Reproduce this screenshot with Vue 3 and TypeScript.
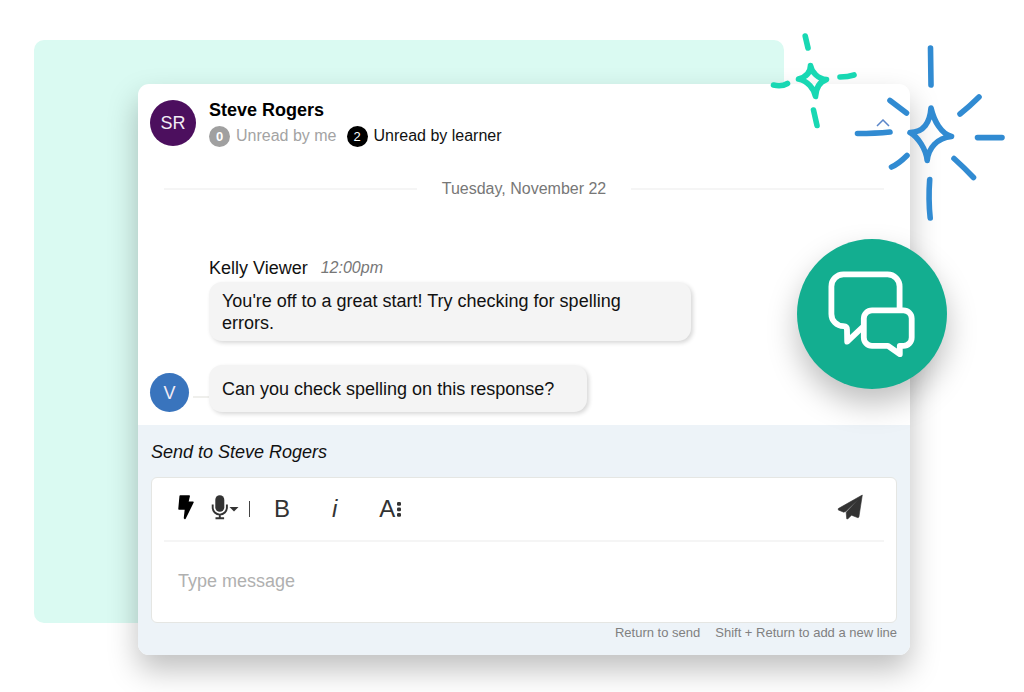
<script setup lang="ts">
import { ref } from 'vue'

interface Message {
  id: number
  author?: string
  time?: string
  initial?: string
  text: string
}

const draft = ref('')
const messages: Message[] = [
  {
    id: 1,
    author: 'Kelly Viewer',
    time: '12:00pm',
    text: "You're off to a great start! Try checking for spelling errors.",
  },
  { id: 2, initial: 'V', text: 'Can you check spelling on this response?' },
]
</script>

<template>
  <main class="page">
    <div class="backdrop"></div>

    <section class="card">
      <header class="head">
        <span class="avatar">SR</span>
        <div class="who">
          <h1>Steve Rogers</h1>
          <div class="unread">
            <span class="count muted">0</span>
            <span class="label muted-text">Unread by me</span>
            <span class="count">2</span>
            <span class="label">Unread by learner</span>
          </div>
        </div>
        <button class="collapse" type="button" aria-label="Collapse conversation">
          <svg width="14" height="8" viewBox="0 0 14 8">
            <path d="M1 7 7 1l6 6" fill="none" stroke="#5b86c9" stroke-width="1.5" />
          </svg>
        </button>
      </header>

      <div class="date"><span>Tuesday, November 22</span></div>

      <ol class="thread">
        <li v-for="m in messages" :key="m.id" class="message">
          <span v-if="m.initial" class="avatar small">{{ m.initial }}</span>
          <span v-if="m.initial" class="tail"></span>
          <div class="body">
            <div v-if="m.author" class="meta">
              <span>{{ m.author }}</span>
              <time>{{ m.time }}</time>
            </div>
            <p class="bubble" :class="{ single: m.initial }">{{ m.text }}</p>
          </div>
        </li>
      </ol>

      <form class="composer" @submit.prevent>
        <label class="to" for="draft">Send to Steve Rogers</label>
        <div class="editor">
          <div class="toolbar">
            <button class="tool bolt" type="button" aria-label="Quick replies">
              <svg width="16" height="26" viewBox="178 494 16 26">
                <path
                  d="M180.200 496h9l-1.500 6.200h5.300L185 518.500l-.5-.5 1-9h-6.500z"
                  fill="#000"
                  stroke="#000"
                  stroke-width="1.500"
                  stroke-linejoin="round"
                />
              </svg>
            </button>
            <button class="tool mic" type="button" aria-label="Record audio">
              <svg width="28" height="26" viewBox="211 494 28 26">
                <rect x="215.300" y="495.300" width="9" height="16.400" rx="4.400" fill="#333" />
                <path
                  d="M212.700 504.500v3a7.100 7.100 0 0 0 14.200 0v-3M219.800 514.500v4M215.500 518.300h8.600"
                  fill="none"
                  stroke="#333"
                  stroke-width="1.900"
                />
                <path d="M229.500 507h9l-4.500 4.500z" fill="#333" />
              </svg>
            </button>
            <span class="bar"></span>
            <button class="tool letter bold" type="button" aria-label="Bold">B</button>
            <button class="tool letter italic" type="button" aria-label="Italic"><i>i</i></button>
            <button class="tool letter" type="button" aria-label="Text options">
              A
              <svg width="8" height="18" viewBox="0 0 8 18">
                <g fill="#333">
                  <rect x="2" y="2" width="4" height="3.800" rx="1.200" />
                  <rect x="2" y="7.500" width="4" height="3.800" rx="1.200" />
                  <rect x="2" y="13" width="4" height="3.800" rx="1.200" />
                </g>
              </svg>
            </button>
            <button class="tool send" type="submit" aria-label="Send">
              <svg width="26" height="26" viewBox="837 494 26 26">
                <path
                  d="M862.300 495 838.300 508.600v1.400l5.500 2.200 2.200-1L858.600 499.200 846.200 512.300l.5 6.500 1 .2 3.800-3.800 6.600 2.600.8-.8z"
                  fill="#333"
                  stroke="#333"
                  stroke-width=".6"
                  stroke-linejoin="round"
                />
              </svg>
            </button>
          </div>
          <textarea id="draft" v-model="draft" placeholder="Type message"></textarea>
        </div>
        <div class="hints">
          <span>Return to send</span>
          <span>Shift + Return to add a new line</span>
        </div>
      </form>

      <div class="badge">
        <svg width="90" height="90" viewBox="827 269 90 90">
          <g fill="none" stroke="#fff" stroke-width="5.800" stroke-linejoin="round">
            <path
              d="M899.600 309v-22.500a12 12 0 0 0-12-12.100h-44a12 12 0 0 0-12.200 12.100v27.500a12 12 0 0 0 12 12.100q3.600 0 3.600 3.600l.2 11.900 15.500-14.600"
            />
            <path
              d="M872 310.400h31.500a8.200 8.200 0 0 1 8.200 8.200v19a8.200 8.200 0 0 1-8.200 8.200h-3.700v8.400l-11.800-8.400H872a8.200 8.200 0 0 1-8.200-8.200v-19a8.200 8.200 0 0 1 8.200-8.200z"
            />
          </g>
        </svg>
      </div>

      <svg class="spark green" width="96" height="100" viewBox="766 30 96 100">
        <path
          d="M805.200 36l2.800 12M773.500 85q8 2 14-1.500M840 77q8 0 14-2M813.500 110l3.500 15.500M810.500 65.500C811.500 72 818 79 826.500 79.500C819 82 816 88 815.500 96.500C814 89 808 81 798.500 79C806 77 810.500 73 810.500 65.500z"
        />
      </svg>

      <svg class="spark blue" width="160" height="185" viewBox="850 40 160 185">
        <path
          d="M930.500 48l.5 37M857.500 133.500q18 0 32.500-1.500M890 100.500l16.500 12.500M979 97q-9 9-19 17M977.500 137.600h24.500M954 158.500q10 9 19.500 19M891.500 167q7-3 15.500-11.500M929.700 179.500q-1.500 20 .5 38.500M931 108C934 121 941 133.500 951.500 136.500C937 138 928.500 148 927.200 160.500C926 149 918 137 910 132.500C924 132.500 930 122 931 108z"
        />
      </svg>
    </section>
  </main>
</template>

<style>
body {
  margin: 0;
  background: #fff;
}
</style>

<style scoped>
.page {
  position: relative;
  padding: 84px 114px 37px 138px;
  overflow: hidden;
  font-family: 'Liberation Sans', Arial, sans-serif;
  font-size: 18px;
  line-height: 22px;
  color: #111;
}
.backdrop {
  position: absolute;
  inset: 40px 240px 69px 34px;
  border-radius: 10px;
  background: #dafaf2;
}
.card {
  position: relative;
  border-radius: 11px;
  background: #fff;
  box-shadow: 0 15px 30px rgba(0, 0, 0, 0.25);
}
.head {
  display: flex;
  align-items: center;
  gap: 13px;
  padding: 13px 20px 0 12px;
}
.avatar {
  display: flex;
  flex: none;
  align-items: center;
  justify-content: center;
  width: 46px;
  height: 46px;
  border-radius: 50%;
  background: #4c0f5e;
  color: #f3ecf5;
}
.who {
  flex: 1;
}
h1 {
  margin: 0;
  font-size: 18px;
  line-height: 26px;
  color: #000;
}
.unread {
  display: flex;
  align-items: center;
  font-size: 16px;
  line-height: 26px;
}
.count {
  width: 21px;
  height: 21px;
  margin-right: 6px;
  border-radius: 50%;
  background: #000;
  color: #fff;
  font-size: 13px;
  line-height: 21px;
  text-align: center;
}
.count.muted {
  background: #a0a0a0;
  font-weight: bold;
}
.muted-text {
  margin-right: 10px;
  color: #a3a3a3;
}
button {
  padding: 0;
  border: 0;
  background: none;
  color: #333;
  font: inherit;
}
button svg {
  display: block;
}
.date {
  display: flex;
  align-items: center;
  gap: 25px;
  margin: 29px 26px 0;
  font-size: 16px;
  color: #777;
}
.date::before,
.date::after {
  content: '';
  flex: 1;
  height: 2px;
  background: #f5f5f5;
}
.thread {
  display: flex;
  flex-direction: column;
  gap: 24px;
  margin: 0;
  padding: 57px 12px 13px;
  list-style: none;
}
.message {
  display: flex;
  align-items: flex-end;
  min-width: 0;
}
.message .body {
  max-width: 482px;
}
.message .body:first-child {
  margin-left: 59px;
}
.meta {
  display: flex;
  gap: 13px;
  margin-bottom: 3px;
}
.meta time {
  font-size: 16px;
  font-style: italic;
  color: #777;
}
.bubble {
  margin: 0;
  padding: 8px 48px 7px 13px;
  border-radius: 13px;
  background: #f4f4f4;
  box-shadow: 2px 2px 4px rgba(0, 0, 0, 0.16);
}
.bubble.single {
  padding: 13px 33px 12px 13px;
}
.avatar.small {
  width: 39px;
  height: 39px;
  background: #3974bd;
}
.tail {
  width: 16px;
  height: 14px;
  margin: 0 0 14px 4px;
  border-bottom: 2px solid #efefec;
}
.composer {
  padding: 16px 13px 12px;
  border-radius: 0 0 11px 11px;
  background: #edf3f8;
}
.to {
  display: block;
  margin-bottom: 14px;
  font-style: italic;
}
.editor {
  padding: 0 12px;
  border: 1px solid #e5e6e3;
  border-radius: 6px;
  background: #fff;
}
.toolbar {
  display: flex;
  align-items: center;
  height: 62px;
  border-bottom: 2px solid #f5f5f5;
}
.bolt,
.mic,
.send {
  padding-bottom: 4px;
}
.mic {
  margin-left: 17px;
}
.bolt {
  margin-left: 14px;
}
.bar {
  width: 1px;
  height: 16px;
  margin: 0 24px 0 10px;
  background: #444;
}
.letter {
  display: flex;
  align-items: center;
  font-size: 24px;
}
.italic {
  margin: 0 42px 0 42px;
}
.send {
  margin-left: auto;
  margin-right: 21px;
}
textarea {
  display: block;
  box-sizing: border-box;
  width: 100%;
  height: 80px;
  padding: 28px 14px;
  border: 0;
  outline: 0;
  resize: none;
  background: none;
  color: #111;
  font: inherit;
}
textarea::placeholder {
  color: #b0b0b0;
  opacity: 1;
}
.hints {
  display: flex;
  justify-content: flex-end;
  gap: 15px;
  font-size: 13px;
  line-height: 20px;
  color: #808080;
}
.badge {
  position: absolute;
  top: 155px;
  right: -37px;
  display: flex;
  align-items: center;
  justify-content: center;
  width: 150px;
  height: 150px;
  border-radius: 50%;
  background: #13ae90;
  box-shadow: 0 15px 30px rgba(0, 0, 0, 0.25);
}
.spark {
  position: absolute;
  fill: none;
  stroke-width: 5.6;
  stroke-linecap: round;
  stroke-linejoin: round;
}
.spark.green {
  top: -54px;
  right: 48px;
  stroke: #18d8b3;
}
.spark.blue {
  top: -44px;
  right: -100px;
  stroke: #318bd2;
}
</style>
